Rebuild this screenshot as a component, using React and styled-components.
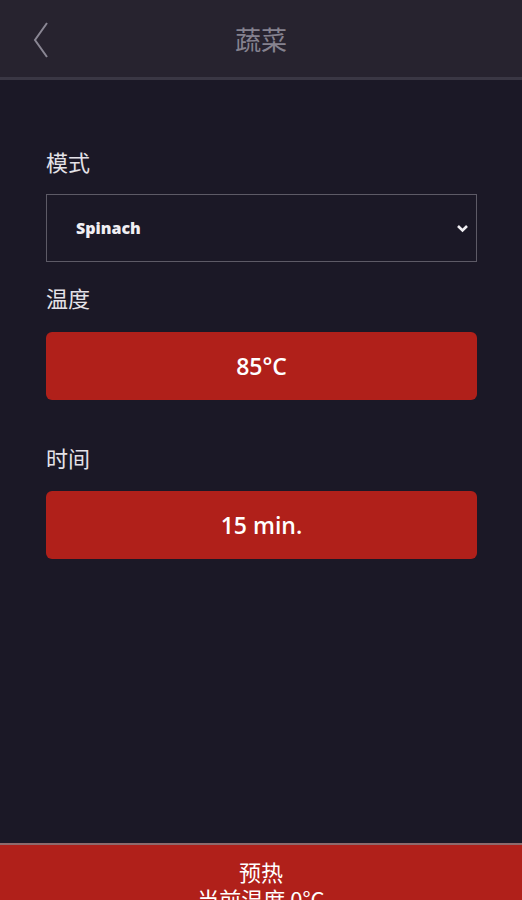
import styled, { createGlobalStyle } from 'styled-components';

const GlobalStyle = createGlobalStyle`
    html, body {
        margin: 0;
        padding: 0;
        background: #1b1826;
        font-family: "Open Sans", "Noto Sans CJK SC", sans-serif;
    }
    * {
        box-sizing: border-box;
    }
`

const Page = styled.div`
    width: 522px;
    height: 900px;
    display: flex;
    flex-direction: column;
    background: #1b1826;
    overflow: hidden;
`

const Header = styled.header`
    height: 80px;
    flex-shrink: 0;
    background: #27232f;
    border-bottom: 3px solid #3a3744;
    display: flex;
    align-items: center;
    justify-content: center;
    position: relative;
`

const Back = styled.button`
    position: absolute;
    left: 26px;
    top: 18px;
    width: 30px;
    height: 44px;
    padding: 0;
    border: none;
    background: none;
    display: flex;
    align-items: center;
    justify-content: center;
`

const Title = styled.h1`
    margin: 0;
    font-family: "Noto Sans CJK SC", sans-serif;
    font-size: 26px;
    font-weight: 400;
    color: #85828f;
`

const Content = styled.main`
    flex: 1;
    padding: 66px 45px 0 46px;
    display: flex;
    flex-direction: column;
`

const Label = styled.div`
    font-family: "Noto Sans CJK SC", sans-serif;
    font-size: 22px;
    line-height: 30px;
    color: #e4e2e8;
    margin-top: ${({ $gap }) => $gap || 0}px;
    margin-bottom: ${({ $below }) => $below || 0}px;
`

const SelectBox = styled.div`
    height: 68px;
    border: 1px solid #5d5a66;
    display: flex;
    align-items: center;
    justify-content: space-between;
    padding: 0 7px 0 29px;
`

const SelectText = styled.span`
    font-size: 16px;
    font-weight: 800;
    color: #f0eef2;
`

const Value = styled.div`
    height: 68px;
    border-radius: 6px;
    background: #b0201a;
    display: flex;
    align-items: center;
    justify-content: center;
    font-family: "Open Sans", sans-serif;
    font-size: 23px;
    font-weight: 600;
    color: #ffffff;
`

const Footer = styled.footer`
    height: 57px;
    flex-shrink: 0;
    background: #b0201a;
    border-top: 2px solid #8e6a6c;
    display: flex;
    flex-direction: column;
    align-items: center;
    padding-top: 13px;
    font-family: "Noto Sans CJK SC", sans-serif;
    font-size: 22px;
    line-height: 27px;
    color: #ffffff;
`

export default function App() {
    return (
        <Page>
            <GlobalStyle />
            <Header>
                <Back aria-label="back">
                    <svg width="16" height="36" viewBox="0 0 16 36">
                        <path d="M14 1 L2 18 L14 35" fill="none" stroke="#8a8794" strokeWidth="2" />
                    </svg>
                </Back>
                <Title>蔬菜</Title>
            </Header>
            <Content>
                <Label $below={18}>模式</Label>
                <SelectBox>
                    <SelectText>Spinach</SelectText>
                    <svg width="13" height="9" viewBox="0 0 13 9">
                        <path d="M2 2 L6.5 6.5 L11 2" fill="none" stroke="#f0eef2" strokeWidth="2.6" />
                    </svg>
                </SelectBox>
                <Label $gap={20} $below={20}>温度</Label>
                <Value>85°C</Value>
                <Label $gap={42} $below={19}>时间</Label>
                <Value>15 min.</Value>
            </Content>
            <Footer>
                <div>预热</div>
                <div>当前温度 0°C</div>
            </Footer>
        </Page>
    )
}
